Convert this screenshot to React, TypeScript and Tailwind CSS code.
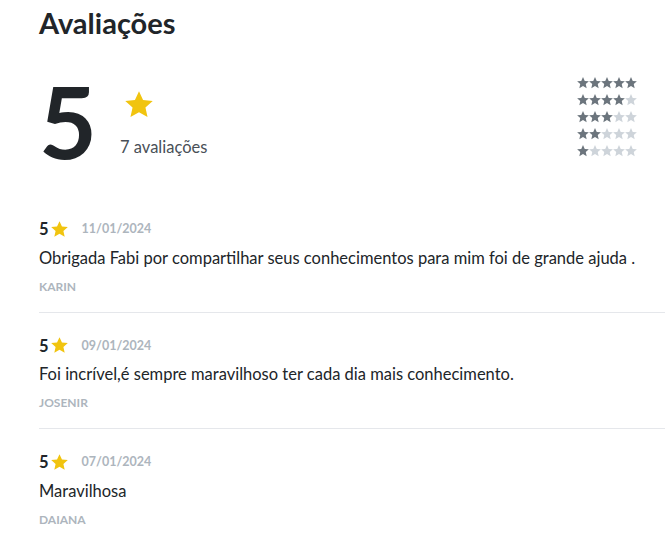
import React from "react";

const Star = ({ className = "" }: { className?: string }) => (
  <svg viewBox="2 2 20 20" className={className} fill="currentColor">
    <path d="M12 2.2l2.9 6.3 6.9.7-5.2 4.6 1.5 6.8L12 17.1l-6.1 3.5 1.5-6.8L2.2 9.2l6.9-.7z" />
  </svg>
);

const reviews = [
  { date: "11/01/2024", text: "Obrigada Fabi por compartilhar seus conhecimentos para mim foi de grande ajuda .", name: "KARIN" },
  { date: "09/01/2024", text: "Foi incrível,é sempre maravilhoso ter cada dia mais conhecimento.", name: "JOSENIR" },
  { date: "07/01/2024", text: "Maravilhosa", name: "DAIANA" },
];

export default function App() {
  return (
    <div className="w-[665px] h-[540px] overflow-hidden bg-white pl-[39px] text-[#212529]" style={{ fontFamily: "Lato, 'Open Sans', sans-serif" }}>
      <h1 className="text-[29px] font-bold leading-none pt-[8px]">Avaliações</h1>
      <div className="flex items-start mt-[35px] pr-[28px]">
        <div className="text-[100px] font-bold leading-none mt-[-2px]">5</div>
        <div className="ml-[24px] flex flex-col">
          <Star className="w-[28px] h-[28px] text-[#f1c40f] ml-[4px] mt-[19px]" />
          <div className="text-[16.5px] text-[#495057] mt-[16px] ml-[-1px]">7 avaliações</div>
        </div>
        <div className="ml-auto flex flex-col gap-[5px] mt-[5px]">
          {[5, 4, 3, 2, 1].map((n) => (
            <div key={n} className="flex">
              {[0, 1, 2, 3, 4].map((i) => (
                <Star key={i} className={`w-[12px] h-[12px] ${i < n ? "text-[#6c757d]" : "text-[#ced4da]"}`} />
              ))}
            </div>
          ))}
        </div>
      </div>
      <div className="mt-[40px]">
        {reviews.map((r, idx) => (
          <div key={idx} className={`pb-[16px] ${idx < reviews.length - 1 ? "border-b border-[#e5e7eb]" : ""} ${idx > 0 ? "pt-[24px]" : "pt-[10px]"}`}>
            <div className="flex items-center">
              <span className="text-[16.5px] font-bold leading-none">5</span>
              <Star className="w-[17px] h-[17px] text-[#f1c40f] ml-[2px]" />
              <span className="text-[12.5px] font-bold text-[#adb5bd] ml-[14px]">{r.date}</span>
            </div>
            <div className="text-[16.5px] mt-[7px]">{r.text}</div>
            <div className="text-[12px] font-bold text-[#adb5bd] mt-[7px]">{r.name}</div>
          </div>
        ))}
      </div>
    </div>
  );
}
